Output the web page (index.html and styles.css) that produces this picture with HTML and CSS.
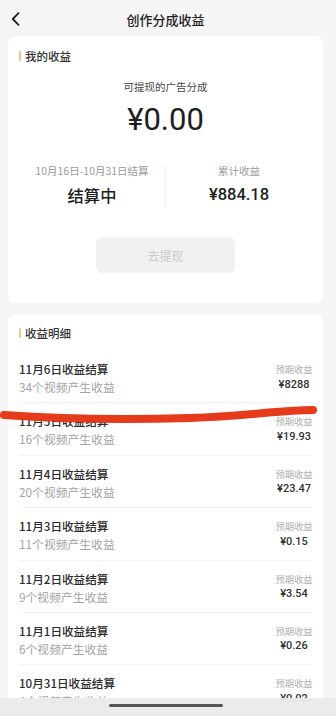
FILE: index.html
```html
<!DOCTYPE html>
<html lang="zh-CN">
<head>
<meta charset="utf-8">
<title>创作分成收益</title>
<link rel="stylesheet" href="styles.css">
</head>
<body>
<div class="page">
  <header class="topbar">
    <div class="back">
      <svg width="9" height="14" viewBox="0 0 9 14"><path d="M7.5 1.2 L1.8 7 L7.5 12.8" fill="none" stroke="#222" stroke-width="1.8" stroke-linecap="round" stroke-linejoin="round"/></svg>
    </div>
    <h1 class="title">创作分成收益</h1>
    <div></div>
  </header>

  <section class="card summary">
    <div class="label"><span class="mark"></span>我的收益</div>
    <p class="avail-label">可提现的广告分成</p>
    <div class="avail-amount">¥0.00</div>
    <div class="stats">
      <div class="stat">
        <div class="stat-label">10月16日-10月31日结算</div>
        <div class="stat-value cjk">结算中</div>
      </div>
      <div class="vdivider"></div>
      <div class="stat">
        <div class="stat-label">累计收益</div>
        <div class="stat-value num">¥884.18</div>
      </div>
    </div>
    <div class="btn">去提现</div>
  </section>

  <section class="card detail">
    <div class="label"><span class="mark"></span>收益明细</div>
    <ul class="rows">
      <li class="row"><div class="info"><div class="r-title">11月6日收益结算</div><div class="r-sub">34个视频产生收益</div></div><div class="amt"><div class="amt-label">预期收益</div><div class="amt-val">¥8288</div></div></li>
      <li class="row"><div class="info"><div class="r-title">11月5日收益结算</div><div class="r-sub">16个视频产生收益</div></div><div class="amt"><div class="amt-label">预期收益</div><div class="amt-val">¥19.93</div></div></li>
      <li class="row"><div class="info"><div class="r-title">11月4日收益结算</div><div class="r-sub">20个视频产生收益</div></div><div class="amt"><div class="amt-label">预期收益</div><div class="amt-val">¥23.47</div></div></li>
      <li class="row"><div class="info"><div class="r-title">11月3日收益结算</div><div class="r-sub">11个视频产生收益</div></div><div class="amt"><div class="amt-label">预期收益</div><div class="amt-val">¥0.15</div></div></li>
      <li class="row"><div class="info"><div class="r-title">11月2日收益结算</div><div class="r-sub">9个视频产生收益</div></div><div class="amt"><div class="amt-label">预期收益</div><div class="amt-val">¥3.54</div></div></li>
      <li class="row"><div class="info"><div class="r-title">11月1日收益结算</div><div class="r-sub">6个视频产生收益</div></div><div class="amt"><div class="amt-label">预期收益</div><div class="amt-val">¥0.26</div></div></li>
      <li class="row"><div class="info"><div class="r-title">10月31日收益结算</div><div class="r-sub">4个视频产生收益</div></div><div class="amt"><div class="amt-label">预期收益</div><div class="amt-val">¥0.02</div></div></li>
    </ul>
  </section>
</div>

<svg class="scribble" width="336" height="30" viewBox="0 0 336 30"><path d="M4 15 C 60 19, 130 20, 190 18 S 280 10, 313 10" fill="none" stroke="#e63a1c" stroke-width="8" stroke-linecap="round"/></svg>

<div class="homebar"><span class="indicator"></span></div>
</body>
</html>
```

FILE: styles.css
```css
* { box-sizing: border-box; }
html, body { margin: 0; padding: 0; }
body {
  width: 336px;
  height: 716px;
  overflow: hidden;
  position: relative;
  background: #f5f5f5;
  font-family: "Noto Sans CJK SC", "Noto Sans", sans-serif;
  color: #222;
}
.page {
  padding: 0 13px 0 8px;
}
.topbar {
  height: 36px;
  display: grid;
  grid-template-columns: 1fr auto 1fr;
  align-items: center;
}
.back {
  display: flex;
  align-items: center;
  padding-left: 3px;
  padding-top: 2px;
}
.title {
  margin: 0;
  font-size: 13px;
  font-weight: 500;
  line-height: 18px;
  padding-top: 4px;
  color: #222;
}
.card {
  background: #fff;
  border-radius: 8px;
  padding: 0 11px;
}
.label {
  display: flex;
  align-items: center;
  gap: 4px;
  font-size: 11.5px;
  font-weight: 500;
  line-height: 12px;
  color: #333;
}
.mark {
  width: 2px;
  height: 10px;
  border-radius: 1px;
  background: #f3c680;
}
.summary {
  padding-top: 14px;
  padding-bottom: 30px;
}
.avail-label {
  margin: 18px 0 0;
  text-align: center;
  font-size: 10.5px;
  line-height: 14px;
  color: #444;
}
.avail-amount {
  margin-top: 8px;
  text-align: center;
  font-family: Roboto, "Noto Sans", sans-serif;
  font-size: 31px;
  line-height: 36px;
  color: #1e1e1e;
}
.stats {
  margin-top: 26px;
  display: grid;
  grid-template-columns: 1fr 1px 1fr;
  align-items: center;
}
.stat {
  display: flex;
  flex-direction: column;
  align-items: center;
  gap: 6px;
}
.stat-label {
  font-size: 10.5px;
  line-height: 14px;
  color: #9a9a9a;
  white-space: nowrap;
}
.stat-value {
  line-height: 22px;
  color: #1e1e1e;
}
.stat-value.cjk {
  font-size: 16.3px;
  font-weight: 500;
}
.stat-value.num {
  font-family: Roboto, "Noto Sans", sans-serif;
  font-size: 16.5px;
  font-weight: 500;
}
.vdivider {
  width: 1px;
  height: 41px;
  background: #efefef;
}
.btn {
  width: 139px;
  height: 36px;
  margin: 31px auto 0;
  border-radius: 6px;
  background: #f1f1f1;
  color: #c9c9c9;
  font-size: 12px;
  display: flex;
  align-items: center;
  justify-content: center;
}
.detail {
  margin-top: 11px;
  padding-top: 13px;
  min-height: 420px;
}
.rows {
  list-style: none;
  margin: 12px 0 0;
  padding: 0;
}
.row {
  height: 52.4px;
  padding-top: 11px;
  border-bottom: 1px solid #f3f3f3;
  display: flex;
  justify-content: space-between;
  align-items: flex-start;
}
.r-title {
  font-size: 11.6px;
  font-weight: 500;
  line-height: 14px;
  color: #2a2a2a;
}
.r-sub {
  margin-top: 4px;
  font-size: 11.8px;
  line-height: 14px;
  color: #a3a3a3;
}
.amt {
  width: 42px;
  margin-right: -3px;
  text-align: center;
}
.amt-label {
  font-size: 9.3px;
  line-height: 14px;
  color: #b0b0b0;
  white-space: nowrap;
}
.amt-val {
  margin-top: 1.5px;
  font-family: Roboto, "Noto Sans", sans-serif;
  font-size: 11px;
  font-weight: 500;
  line-height: 14px;
  color: #333;
}
.scribble {
  position: absolute;
  left: 0;
  top: 400px;
}
.homebar {
  position: absolute;
  left: 0;
  right: 0;
  bottom: 0;
  height: 18px;
  background: rgba(234, 234, 234, 0.96);
  display: flex;
  justify-content: center;
  padding-top: 6px;
  padding-right: 5px;
}
.indicator {
  width: 114px;
  height: 3px;
  border-radius: 2px;
  background: #555;
}
```
